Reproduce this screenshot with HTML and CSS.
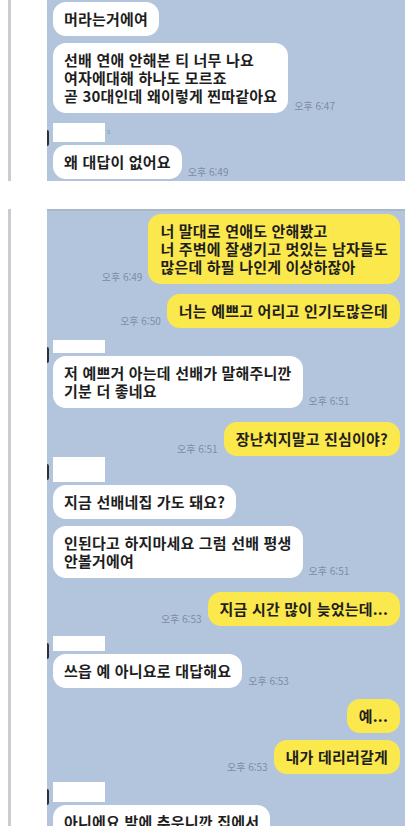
FILE: index.html
```html
<!DOCTYPE html>
<html lang="ko">
<head>
<meta charset="utf-8">
<title>chat</title>
<link rel="stylesheet" href="styles.css">
</head>
<body>
<div class="page">
  <section class="shot shot-top">
    <div class="rail"></div>
    <div class="chat">
      <div class="row other">
        <div class="bubble white">머라는거에여</div>
      </div>
      <div class="row other near">
        <div class="bubble white">선배 연애 안해본 티 너무 나요<br>여자에대해 하나도 모르죠<br>곧 30대인데 왜이렇게 찐따같아요</div>
        <span class="time">오후 6:47</span>
      </div>
      <div class="group g1">
        <span class="avatar"></span>
        <div class="name h19"><span class="blank"></span><span class="mark">s</span></div>
        <div class="row other">
          <div class="bubble white">왜 대답이 없어요</div>
          <span class="time">오후 6:49</span>
        </div>
      </div>
    </div>
  </section>

  <section class="shot shot-bottom">
    <div class="rail"></div>
    <div class="chat">
      <div class="row me">
        <span class="time">오후 6:49</span>
        <div class="bubble yellow">너 말대로 연애도 안해봤고<br>너 주변에 잘생기고 멋있는 남자들도<br>많은데 하필 나인게 이상하잖아</div>
      </div>
      <div class="row me gap10">
        <span class="time">오후 6:50</span>
        <div class="bubble yellow">너는 예쁘고 어리고 인기도많은데</div>
      </div>
      <div class="group g2">
        <span class="avatar"></span>
        <div class="name h13"><span class="blank"></span></div>
        <div class="row other">
          <div class="bubble white">저 예쁘거 아는데 선배가 말해주니깐<br>기분 더 좋네요</div>
          <span class="time">오후 6:51</span>
        </div>
      </div>
      <div class="row me gap14">
        <span class="time">오후 6:51</span>
        <div class="bubble yellow">장난치지말고 진심이야?</div>
      </div>
      <div class="group g3">
        <span class="avatar"></span>
        <div class="name h25"><span class="blank"></span></div>
        <div class="row other">
          <div class="bubble white">지금 선배네집 가도 돼요?</div>
        </div>
      </div>
      <div class="row other near">
        <div class="bubble white">인된다고 하지마세요 그럼 선배 평생<br>안볼거에여</div>
        <span class="time">오후 6:51</span>
      </div>
      <div class="row me gap14">
        <span class="time">오후 6:53</span>
        <div class="bubble yellow">지금 시간 많이 늦었는데...</div>
      </div>
      <div class="group g4">
        <span class="avatar"></span>
        <div class="name h15"><span class="blank"></span></div>
        <div class="row other">
          <div class="bubble white">쓰읍 예 아니요로 대답해요</div>
          <span class="time">오후 6:53</span>
        </div>
      </div>
      <div class="row me gap11">
        <div class="bubble yellow">예...</div>
      </div>
      <div class="row me near">
        <span class="time">오후 6:53</span>
        <div class="bubble yellow">내가 데리러갈게</div>
      </div>
      <div class="group g5">
        <span class="avatar"></span>
        <div class="name h20"><span class="blank"></span></div>
        <div class="row other">
          <div class="bubble white">아니에요 밤에 추우니깐 집에서<br>기다릴게요</div>
        </div>
      </div>
    </div>
  </section>
</div>
</body>
</html>
```

FILE: styles.css
```css
* { box-sizing: border-box; }
html, body {
  margin: 0;
  padding: 0;
  background: #ffffff;
  width: 413px;
  height: 826px;
  overflow: hidden;
  font-family: "Noto Sans CJK KR", "Noto Sans", sans-serif;
}
.page {
  display: flex;
  flex-direction: column;
  gap: 28px;
}
.shot {
  display: flex;
  align-items: stretch;
}
.shot-top { height: 181px; }
.shot-bottom { height: 640px; }
.rail {
  width: 3px;
  margin-left: 8px;
  background: #c9ccd0;
  flex: none;
}
.chat {
  margin-left: 36px;
  width: 358px;
  background: #b3c5dc;
  display: flex;
  flex-direction: column;
  padding: 2px 5px 4px 6px;
  overflow: hidden;
}
.shot-bottom .chat {
  border-top: 2px solid #a9b7c6;
  padding-top: 3px;
}
.row {
  display: flex;
  align-items: flex-end;
  gap: 6px;
}
.row.me { justify-content: flex-end; }
.row.near { margin-top: 7px; }
.row.gap10 { margin-top: 10px; }
.row.gap11 { margin-top: 11px; }
.row.gap14 { margin-top: 14px; }
.bubble {
  font-size: 15px;
  line-height: 18px;
  font-weight: 700;
  color: #1e1e1e;
  padding: 8px 11px;
  border-radius: 13px;
  white-space: nowrap;
  letter-spacing: 0.2px;
}
.bubble.white { background: #ffffff; }
.bubble.yellow { background: #fbe84c; padding: 8px 12px; }
.time {
  font-size: 10px;
  line-height: 12px;
  color: #7d8ca2;
  white-space: nowrap;
  margin-bottom: 1px;
}
.group {
  position: relative;
  display: flex;
  flex-direction: column;
  gap: 3px;
}
.g1 { margin-top: 10px; }
.g2 { margin-top: 12px; }
.g3 { margin-top: 1px; }
.g4 { margin-top: 10px; }
.g5 { margin-top: 8px; }
.name {
  display: flex;
  align-items: flex-start;
  gap: 2px;
}
.blank {
  display: block;
  width: 52px;
  height: 100%;
  background: #ffffff;
}
.name.h13 { height: 13px; }
.name.h15 { height: 15px; }
.name.h19 { height: 19px; }
.name.h20 { height: 20px; }
.name.h25 { height: 25px; }
.mark {
  font-size: 7px;
  line-height: 9px;
  color: #8a96a6;
  margin-top: 4px;
}
.avatar {
  position: absolute;
  left: -8px;
  top: 7px;
  width: 4px;
  height: 16px;
  border-radius: 2px;
  background: #2e3238;
}
```
